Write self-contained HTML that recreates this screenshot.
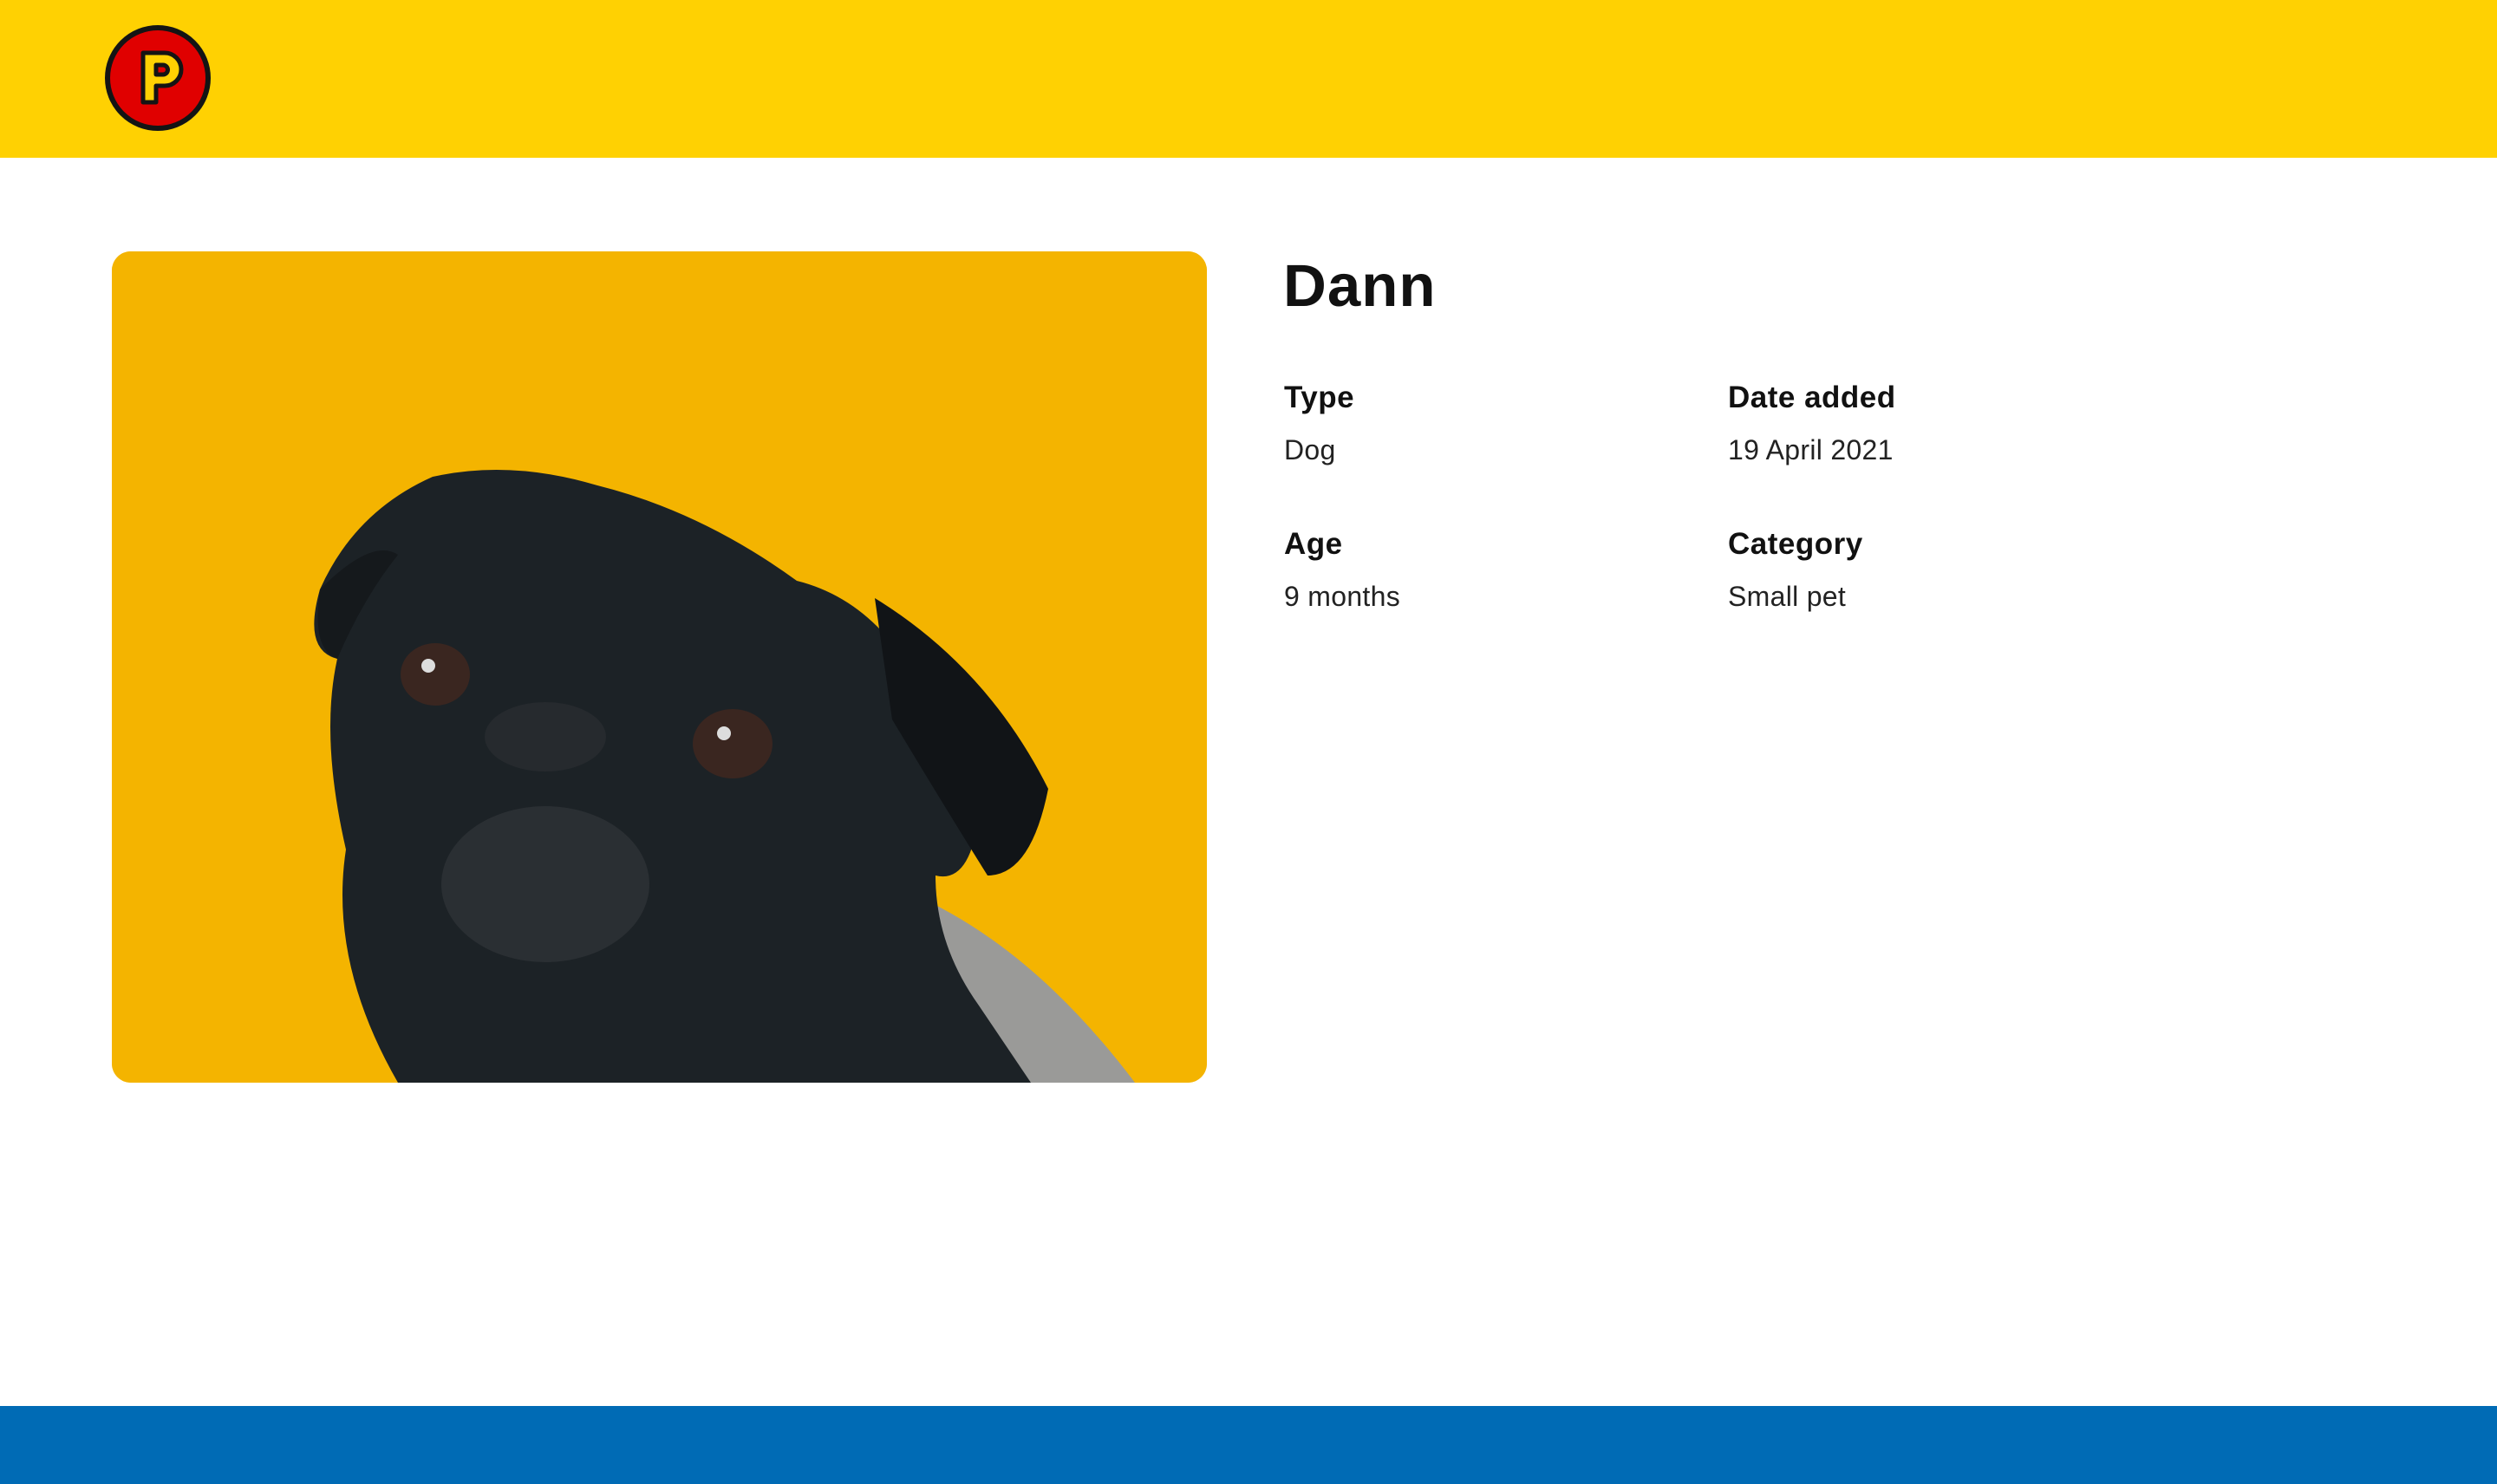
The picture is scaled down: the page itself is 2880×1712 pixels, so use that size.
<!DOCTYPE html>
<html><head><meta charset="utf-8"><style>
html,body{margin:0;padding:0;}
body{width:2880px;height:1712px;position:relative;background:#fff;font-family:"Liberation Sans",sans-serif;color:#111;overflow:hidden;}
.hdr{position:absolute;left:0;top:0;width:2880px;height:182px;background:#ffd102;}
.ftr{position:absolute;left:0;top:1622px;width:2880px;height:90px;background:#006bb5;}
.img{position:absolute;left:129px;top:290px;width:1263px;height:959px;border-radius:22px;overflow:hidden;background:#f4b400;}
.t{position:absolute;white-space:nowrap;}
h1{position:absolute;left:1480px;top:290px;margin:0;font-size:69px;font-weight:bold;line-height:80px;letter-spacing:1px;}
.l{font-weight:bold;font-size:35px;letter-spacing:0.5px;}
.v{font-size:32px;color:#222;letter-spacing:0.3px;}
</style></head><body>
<div class="hdr">
<svg style="position:absolute;left:120px;top:28px" width="124" height="124" viewBox="0 0 124 124">
<circle cx="62" cy="62" r="58" fill="#e00000" stroke="#141414" stroke-width="6"/>
<path d="M45 33 H70 a19 19 0 0 1 0 38 H60 V90 H45 Z M60 47 V58 H68 a5.5 5.5 0 0 0 0-11 Z" fill="#ffd102" stroke="#141414" stroke-width="5" stroke-linejoin="round"/>
</svg>
</div>
<div class="img">
<svg width="1263" height="959" viewBox="0 0 1263 959">
<rect width="1263" height="959" fill="#f4b400"/>
<path d="M920 740 Q1060 800 1180 959 L880 959 Z" fill="#9a9a98"/>
<path d="M330 959 Q250 820 270 690 Q240 560 260 470 Q220 460 240 390 Q280 300 370 260 Q460 240 560 270 Q680 300 790 380 Q870 400 920 480 Q990 560 1000 650 Q990 730 950 720 Q950 800 1000 870 Q1060 959 1060 959 Z" fill="#1c2226"/>
<path d="M240 390 Q230 460 260 470 Q290 400 330 350 Q300 330 240 390 Z" fill="#15191c"/>
<path d="M880 400 Q1010 480 1080 620 Q1060 720 1010 720 Q960 640 900 540 Z" fill="#111417"/>
<ellipse cx="373" cy="488" rx="40" ry="36" fill="#3a2620"/>
<ellipse cx="716" cy="568" rx="46" ry="40" fill="#3a2620"/>
<circle cx="365" cy="478" r="8" fill="#ddd"/>
<circle cx="706" cy="556" r="8" fill="#ddd"/>
<ellipse cx="500" cy="730" rx="120" ry="90" fill="#2a2f33"/>
<ellipse cx="500" cy="560" rx="70" ry="40" fill="#262a2e"/>
</svg>
</div>
<h1>Dann</h1>
<div class="t l" style="left:1481px;top:439px">Type</div>
<div class="t v" style="left:1481px;top:501px">Dog</div>
<div class="t l" style="left:1993px;top:439px">Date added</div>
<div class="t v" style="left:1993px;top:501px">19 April 2021</div>
<div class="t l" style="left:1481px;top:608px">Age</div>
<div class="t v" style="left:1481px;top:670px">9 months</div>
<div class="t l" style="left:1993px;top:608px">Category</div>
<div class="t v" style="left:1993px;top:670px">Small pet</div>
<div class="ftr"></div>
</body></html>
